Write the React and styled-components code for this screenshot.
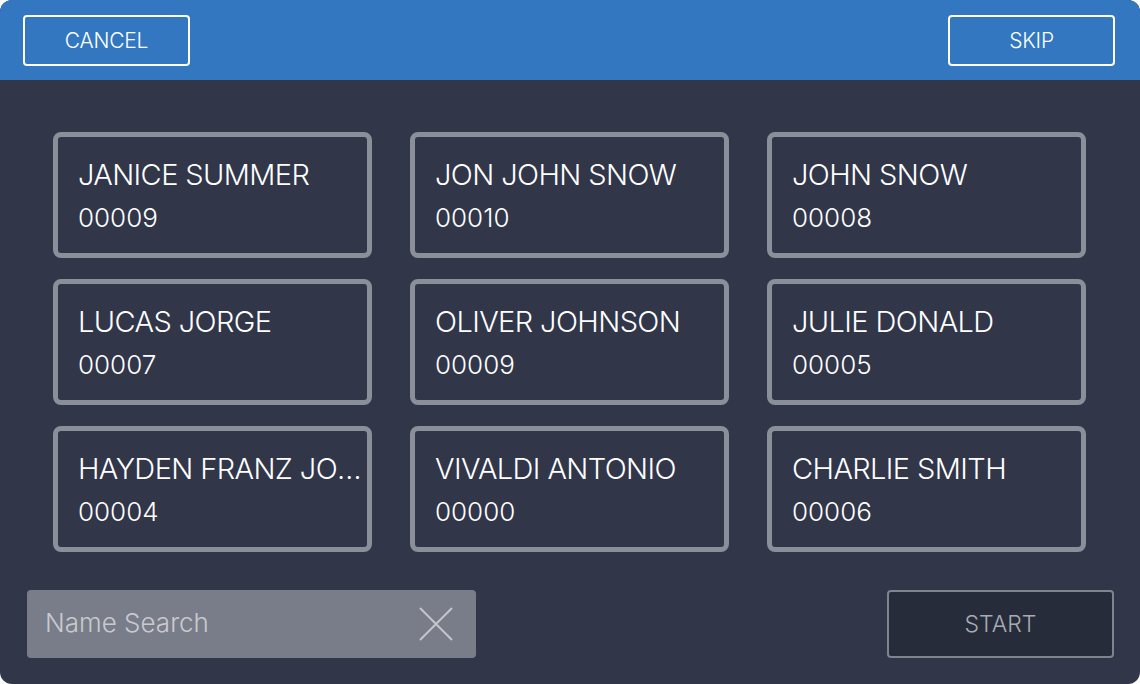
import React from 'react'
import styled, { createGlobalStyle } from 'styled-components'

const GlobalStyle = createGlobalStyle`
  html, body {
    margin: 0;
    padding: 0;
    background: #ffffff;
  }
  * {
    box-sizing: border-box;
  }
`

const people = [
  { name: 'JANICE SUMMER', id: '00009' },
  { name: 'JON JOHN SNOW', id: '00010' },
  { name: 'JOHN SNOW', id: '00008' },
  { name: 'LUCAS JORGE', id: '00007' },
  { name: 'OLIVER JOHNSON', id: '00009' },
  { name: 'JULIE DONALD', id: '00005' },
  { name: 'HAYDEN FRANZ JOSEPH', id: '00004' },
  { name: 'VIVALDI ANTONIO', id: '00000' },
  { name: 'CHARLIE SMITH', id: '00006' },
]

export default function App() {
  return (
    <>
      <GlobalStyle />
      <Frame>
        <Header>
          <HeaderButton>CANCEL</HeaderButton>
          <HeaderButton>SKIP</HeaderButton>
        </Header>
        <Body>
          <Grid>
            {people.map((p, i) => (
              <Card key={i}>
                <Name>{p.name}</Name>
                <Code>{p.id}</Code>
              </Card>
            ))}
          </Grid>
          <Footer>
            <Search>
              <SearchInput placeholder="Name Search" />
              <ClearIcon viewBox="0 0 34 34">
                <path d="M1 1 L33 33 M33 1 L1 33" stroke="#c4c6cc" strokeWidth="2" fill="none" />
              </ClearIcon>
            </Search>
            <StartButton>START</StartButton>
          </Footer>
        </Body>
      </Frame>
    </>
  )
}

const Frame = styled.div`
  width: 1140px;
  height: 684px;
  border-radius: 12px;
  overflow: hidden;
  display: flex;
  flex-direction: column;
  background: #313649;
  font-family: Inter, 'Liberation Sans', sans-serif;
`

const Header = styled.div`
  height: 80px;
  flex: none;
  background: #3277bf;
  display: flex;
  justify-content: space-between;
  align-items: flex-start;
  padding: 15px 25px 0 23px;
`

const HeaderButton = styled.button`
  width: 167px;
  height: 51px;
  border: 2px solid #ffffff;
  border-radius: 4px;
  background: transparent;
  color: #ffffff;
  font-family: inherit;
  font-size: 21px;
  font-weight: 300;
  letter-spacing: -0.2px;
  padding: 0;
`

const Body = styled.div`
  flex: 1;
  display: flex;
  flex-direction: column;
  padding: 52px 26px 26px 27px;
`

const Grid = styled.div`
  display: grid;
  grid-template-columns: repeat(3, 319px);
  grid-auto-rows: 126px;
  column-gap: 38px;
  row-gap: 21px;
  padding-left: 26px;
`

const Card = styled.div`
  border: 5px solid #8a8f99;
  border-radius: 8px;
  padding: 20px 4px 0 20px;
  display: flex;
  flex-direction: column;
  color: #ffffff;
  overflow: hidden;
`

const Name = styled.div`
  font-size: 29px;
  font-weight: 300;
  line-height: 36px;
  letter-spacing: -0.6px;
  white-space: nowrap;
  overflow: hidden;
  text-overflow: ellipsis;
`

const Code = styled.div`
  margin-top: 9px;
  font-size: 26px;
  font-weight: 300;
  line-height: 32px;
`

const Footer = styled.div`
  margin-top: auto;
  display: flex;
  justify-content: space-between;
  align-items: center;
`

const Search = styled.div`
  width: 449px;
  height: 68px;
  background: #797d89;
  border-radius: 4px;
  display: flex;
  align-items: center;
  padding: 0 23px 0 18px;
`

const SearchInput = styled.input`
  flex: 1;
  min-width: 0;
  border: none;
  outline: none;
  background: transparent;
  font-family: inherit;
  font-size: 26px;
  font-weight: 300;
  color: #ffffff;
  padding: 0 0 3px;
  &::placeholder {
    color: #c8cacf;
  }
`

const ClearIcon = styled.svg`
  width: 34px;
  height: 34px;
  flex: none;
`

const StartButton = styled.button`
  width: 227px;
  height: 68px;
  background: #272c3a;
  border: 2px solid #80848e;
  border-radius: 4px;
  color: #a8abb3;
  font-family: inherit;
  font-size: 23px;
  font-weight: 300;
  padding: 0;
`
